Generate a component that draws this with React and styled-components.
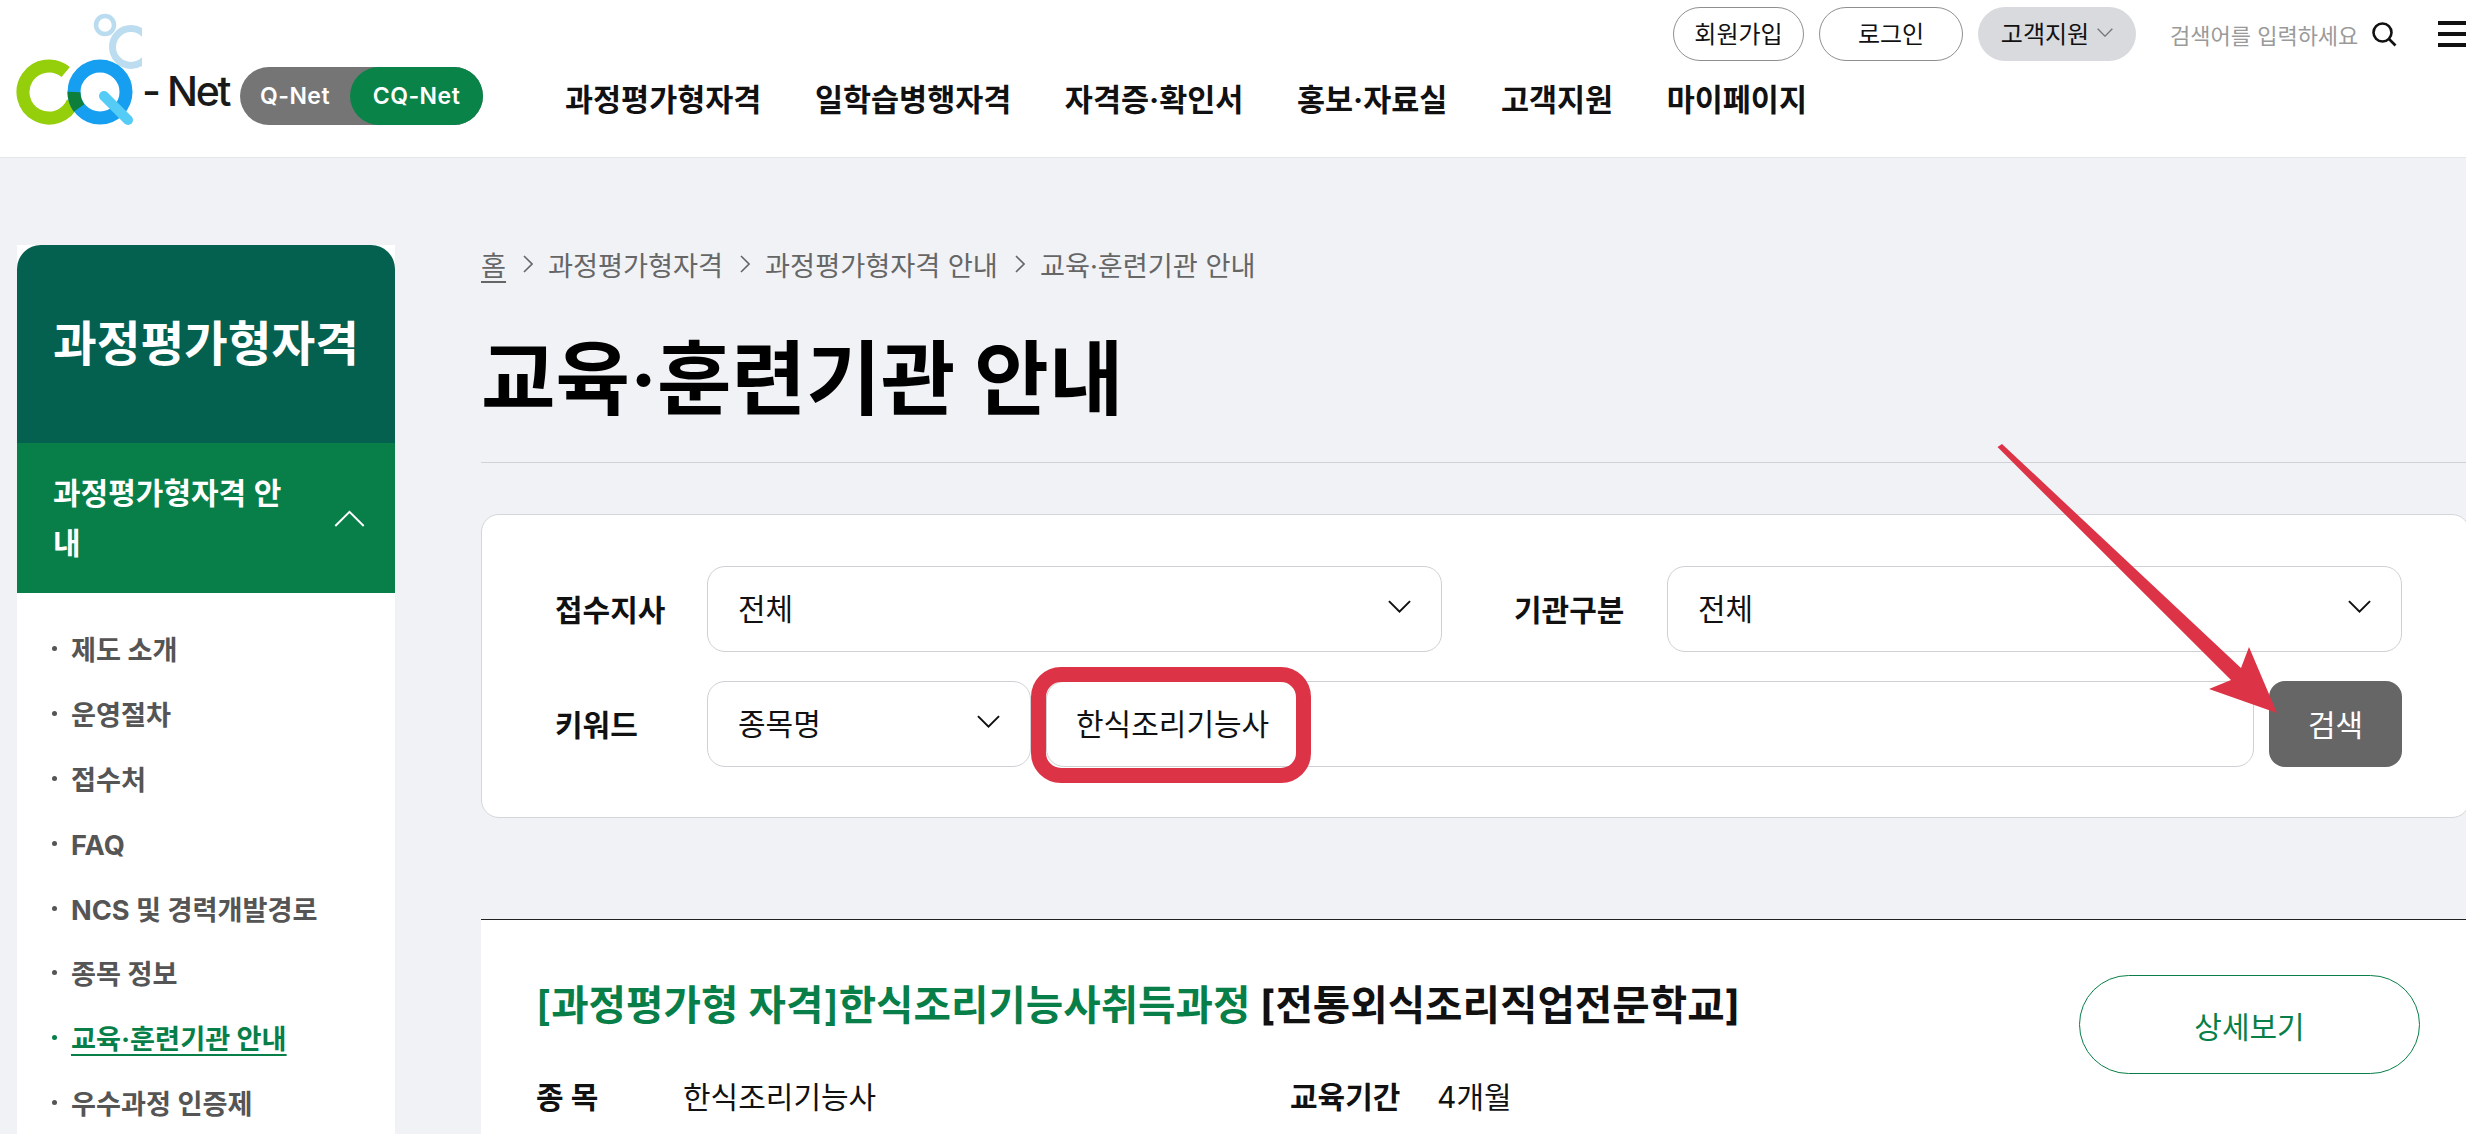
import React from 'react';
import styled, { createGlobalStyle } from 'styled-components';

const GlobalStyle = createGlobalStyle`
  html, body {
    margin: 0;
    padding: 0;
    background: #f0f2f6;
  }
  * {
    box-sizing: border-box;
  }
  body {
    font-family: Inter, "Noto Sans CJK KR", sans-serif;
    color: #111;
  }
`;

const Page = styled.div`
  position: relative;
  width: 2466px;
  height: 1134px;
  overflow: hidden;
  background: #f0f2f6;
`;

const Header = styled.header`
  display: flex;
  height: 158px;
  background: #fff;
  border-bottom: 1px solid #e4e6ea;
`;

const Brand = styled.div`
  display: flex;
  align-items: flex-start;
  flex-shrink: 0;
`;

const LogoText = styled.span`
  width: 86px;
  margin-top: 66px;
  font-size: 41px;
  line-height: 50px;
  font-weight: 500;
  letter-spacing: -2.4px;
  color: #1a1a1a;
  white-space: pre;
`;

const Toggle = styled.div`
  display: flex;
  align-items: center;
  width: 243px;
  height: 58px;
  margin: 67px 0 0 12px;
  border-radius: 29px;
  background: #757575;
`;

const ToggleItem = styled.span`
  display: flex;
  align-items: center;
  justify-content: center;
  height: 100%;
  flex: ${({ $on }) => ($on ? '0 0 133px' : '1')};
  border-radius: 29px;
  background: ${({ $on }) => ($on ? '#0a8349' : 'transparent')};
  color: #fff;
  font-size: 23px;
  font-weight: 600;
  letter-spacing: 0.5px;
`;

const HeaderRight = styled.div`
  flex: 1;
  display: flex;
  flex-direction: column;
  min-width: 0;
`;

const UtilBar = styled.div`
  display: flex;
  align-items: center;
  justify-content: flex-end;
  height: 53px;
  margin: 7px -4px 0 0;
`;

const UtilButton = styled.span`
  display: flex;
  align-items: center;
  justify-content: center;
  gap: 8px;
  width: ${({ $w }) => $w}px;
  height: 54px;
  padding-bottom: 2px;
  margin-left: 15px;
  border-radius: 27px;
  border: ${({ $fill }) => ($fill ? 'none' : '1px solid #8f8f8f')};
  background: ${({ $fill }) => ($fill ? '#d9dade' : '#fff')};
  font-size: 24px;
  color: #111;
`;

const SearchBox = styled.div`
  display: flex;
  align-items: center;
  width: 226px;
  margin-left: 34px;
  font-size: 22px;
  color: #9a9a9a;
  white-space: nowrap;
`;

const SearchIcon = styled.svg`
  margin-left: 13px;
  flex-shrink: 0;
`;

const Hamburger = styled.div`
  display: flex;
  flex-direction: column;
  justify-content: space-between;
  width: 32px;
  height: 26px;
  margin-left: 42px;
  span {
    display: block;
    height: 4px;
    background: #111;
  }
`;

const Nav = styled.nav`
  display: flex;
  gap: 53.5px;
  margin: 18px 0 0 82px;
`;

const NavItem = styled.a`
  font-size: 30.5px;
  line-height: 44px;
  font-weight: 700;
  color: #111;
  white-space: nowrap;
`;

const Main = styled.main`
  display: flex;
  align-items: flex-start;
`;

const Sidebar = styled.aside`
  flex-shrink: 0;
  width: 378px;
  margin: 87px 0 0 17px;
  background: #fff;
`;

const SideTitle = styled.h2`
  display: flex;
  align-items: center;
  height: 198px;
  margin: 0;
  padding: 0 0 8px 36px;
  border-radius: 24px 24px 0 0;
  background: #04614f;
  color: #fff;
  font-size: 47.5px;
  font-weight: 700;
  white-space: nowrap;
`;

const SideGroup = styled.div`
  display: flex;
  align-items: center;
  justify-content: space-between;
  height: 150px;
  padding: 0 30px 0 36px;
  background: #087f48;
  color: #fff;
  font-size: 30px;
  line-height: 50px;
  font-weight: 600;
  span {
    width: 240px;
  }
`;

const SideList = styled.ul`
  margin: 0;
  padding: 26px 0 0;
  list-style: none;
`;

const SideItem = styled.li`
  position: relative;
  height: 64.9px;
  padding-left: 54px;
  font-size: 27.2px;
  line-height: 64.9px;
  font-weight: 700;
  color: ${({ $on }) => ($on ? '#087f48' : '#555')};
  text-decoration: ${({ $on }) => ($on ? 'underline' : 'none')};
  text-underline-offset: 5px;
  white-space: nowrap;
  &::before {
    content: '';
    position: absolute;
    left: 35px;
    top: 27px;
    width: 5px;
    height: 5px;
    border-radius: 50%;
    background: ${({ $on }) => ($on ? '#087f48' : '#555')};
  }
`;

const Content = styled.div`
  flex: 1;
  min-width: 0;
  margin-left: 86px;
  padding-top: 86px;
`;

const Crumbs = styled.div`
  display: flex;
  align-items: center;
  height: 40px;
  font-size: 27.2px;
  color: #666;
  white-space: nowrap;
`;

const Crumb = styled.span`
  text-decoration: ${({ $home }) => ($home ? 'underline' : 'none')};
  text-underline-offset: 5px;
`;

const CrumbSep = styled.svg`
  margin: 0 15px 0 17px;
  flex-shrink: 0;
`;

const PageTitle = styled.h1`
  height: 134px;
  margin: 45px 0 0;
  border-bottom: 1px solid #cfd1d5;
  font-size: 81px;
  line-height: 100px;
  font-weight: 700;
  color: #000;
  white-space: nowrap;
`;

const SearchCard = styled.form`
  width: 1989px;
  height: 304px;
  margin-top: 51px;
  padding: 51px 67px 0 73px;
  border: 1px solid #d5d6da;
  border-radius: 18px;
  background: #fff;
`;

const FormRow = styled.div`
  display: flex;
  align-items: center;
  margin-top: ${({ $top }) => $top || 0}px;
`;

const FieldLabel = styled.label`
  flex-shrink: 0;
  width: ${({ $w }) => $w}px;
  margin-left: ${({ $left }) => $left || 0}px;
  padding-bottom: 3px;
  font-size: 30px;
  font-weight: 700;
  color: #111;
`;

const Select = styled.div`
  display: flex;
  align-items: center;
  justify-content: space-between;
  flex: ${({ $w }) => ($w ? `0 0 ${$w}px` : '1')};
  height: 86px;
  padding: 0 30px 4px;
  border: 1px solid #cfd0d4;
  border-radius: 18px;
  background: #fff;
  font-size: 30px;
`;

const InputWrap = styled.div`
  position: relative;
  flex: 1;
  margin: 0 15px;
`;

const Input = styled.div`
  display: flex;
  align-items: center;
  height: 86px;
  padding: 0 29px 4px;
  border: 1px solid #cfd0d4;
  border-radius: 18px;
  background: #fff;
  font-size: 30px;
`;

const Highlight = styled.div`
  position: absolute;
  left: -15px;
  top: -14px;
  width: 280px;
  height: 116px;
  border: 15px solid #dc3446;
  border-radius: 30px;
`;

const SearchButton = styled.span`
  display: flex;
  align-items: center;
  justify-content: center;
  flex: 0 0 133px;
  height: 86px;
  padding-bottom: 2px;
  border-radius: 16px;
  background: #666;
  color: #fff;
  font-size: 30px;
`;

const Result = styled.section`
  margin-top: 101px;
  padding: 55px 46px 0 55px;
  border-top: 1px solid #222;
  background: #fff;
  height: 300px;
`;

const ResultHead = styled.div`
  display: flex;
  align-items: flex-start;
  justify-content: space-between;
  height: 97px;
`;

const ResultTitle = styled.h3`
  margin: 1px 0 0;
  font-size: 40.7px;
  line-height: 60px;
  font-weight: 700;
  color: #111;
  white-space: nowrap;
  em {
    font-style: normal;
    font-weight: 600;
    color: #087f48;
  }
`;

const DetailButton = styled.span`
  display: flex;
  align-items: center;
  justify-content: center;
  width: 341px;
  height: 99px;
  border: 1px solid #087f48;
  border-radius: 50px;
  color: #087f48;
  font-size: 30px;
`;

const InfoRow = styled.div`
  display: flex;
  line-height: 50px;
  font-size: 30px;
`;

const InfoCell = styled.div`
  display: flex;
  width: 754px;
`;

const InfoLabel = styled.span`
  width: 147px;
  font-weight: 700;
`;

const ArrowSvg = styled.svg`
  position: absolute;
  left: 1990px;
  top: 440px;
`;

const Chevron = ({ size = 23, up, color = '#111', width = 2 }) => (
  <svg width={size} height={size * 0.6} viewBox="0 0 24 14" fill="none" stroke={color} strokeWidth={width * (24 / size)}>
    <path d={up ? 'M1 13 L12 2 L23 13' : 'M1 1 L12 12 L23 1'} />
  </svg>
);

const CrumbArrow = () => (
  <CrumbSep width="10" height="18" viewBox="0 0 10 18" fill="none" stroke="#666" strokeWidth="1.6">
    <path d="M1 1 L9 9 L1 17" />
  </CrumbSep>
);

const Logo = () => (
  <svg width="142" height="125" viewBox="0 0 142 125" fill="none">
    <circle cx="105" cy="25" r="9" stroke="#b9dcf1" strokeWidth="4.5" />
    <circle cx="131" cy="47" r="18.5" stroke="#bcdcf0" strokeWidth="7" />
    <path d="M65.7 72.1 A26 26 0 1 0 73 102" stroke="#95cf0b" strokeWidth="13" />
    <circle cx="100" cy="92" r="26" stroke="#169ff0" strokeWidth="13" />
    <path d="M74 92 A26 26 0 0 0 79 108" stroke="#0d7f3a" strokeWidth="13" />
    <path d="M104 96 L128 120" stroke="#55ccf5" strokeWidth="10" strokeLinecap="round" />
  </svg>
);

const navItems = ['과정평가형자격', '일학습병행자격', '자격증·확인서', '홍보·자료실', '고객지원', '마이페이지'];
const sideItems = ['제도 소개', '운영절차', '접수처', 'FAQ', 'NCS 및 경력개발경로', '종목 정보', '교육·훈련기관 안내', '우수과정 인증제'];
const crumbs = ['과정평가형자격', '과정평가형자격 안내', '교육·훈련기관 안내'];

export default function App() {
  return (
    <Page>
      <GlobalStyle />
      <Header>
        <Brand>
          <Logo />
          <LogoText>- Net</LogoText>
          <Toggle>
            <ToggleItem>Q-Net</ToggleItem>
            <ToggleItem $on>CQ-Net</ToggleItem>
          </Toggle>
        </Brand>
        <HeaderRight>
          <UtilBar>
            <UtilButton $w={131}>회원가입</UtilButton>
            <UtilButton $w={144}>로그인</UtilButton>
            <UtilButton $w={158} $fill>
              고객지원 <Chevron size={16} color="#777" width={1.4} />
            </UtilButton>
            <SearchBox>
              검색어를 입력하세요
              <SearchIcon width="26" height="26" viewBox="0 0 26 26" fill="none" stroke="#111" strokeWidth="2.6">
                <circle cx="11.5" cy="11.5" r="9" />
                <path d="M18 18 L24.5 24.5" />
              </SearchIcon>
            </SearchBox>
            <Hamburger>
              <span />
              <span />
              <span />
            </Hamburger>
          </UtilBar>
          <Nav>
            {navItems.map((item) => (
              <NavItem key={item}>{item}</NavItem>
            ))}
          </Nav>
        </HeaderRight>
      </Header>

      <Main>
        <Sidebar>
          <SideTitle>과정평가형자격</SideTitle>
          <SideGroup>
            <span>과정평가형자격 안내</span>
            <Chevron size={31} up color="#fff" width={2} />
          </SideGroup>
          <SideList>
            {sideItems.map((item) => (
              <SideItem key={item} $on={item === '교육·훈련기관 안내'}>
                {item}
              </SideItem>
            ))}
          </SideList>
        </Sidebar>

        <Content>
          <Crumbs>
            <Crumb $home>홈</Crumb>
            {crumbs.map((item) => (
              <React.Fragment key={item}>
                <CrumbArrow />
                <Crumb>{item}</Crumb>
              </React.Fragment>
            ))}
          </Crumbs>
          <PageTitle>교육·훈련기관 안내</PageTitle>

          <SearchCard>
            <FormRow>
              <FieldLabel $w={152}>접수지사</FieldLabel>
              <Select $w={735}>
                전체
                <Chevron />
              </Select>
              <FieldLabel $w={153} $left={72}>
                기관구분
              </FieldLabel>
              <Select>
                전체
                <Chevron />
              </Select>
            </FormRow>
            <FormRow $top={29}>
              <FieldLabel $w={152}>키워드</FieldLabel>
              <Select $w={324}>
                종목명
                <Chevron />
              </Select>
              <InputWrap>
                <Input>한식조리기능사</Input>
                <Highlight />
              </InputWrap>
              <SearchButton>검색</SearchButton>
            </FormRow>
          </SearchCard>

          <Result>
            <ResultHead>
              <ResultTitle>
                <em>[과정평가형 자격]한식조리기능사취득과정</em> [전통외식조리직업전문학교]
              </ResultTitle>
              <DetailButton>상세보기</DetailButton>
            </ResultHead>
            <InfoRow>
              <InfoCell>
                <InfoLabel>종 목</InfoLabel>
                한식조리기능사
              </InfoCell>
              <InfoCell>
                <InfoLabel>교육기간</InfoLabel>
                4개월
              </InfoCell>
            </InfoRow>
          </Result>
        </Content>
      </Main>

      <ArrowSvg width="300" height="290" viewBox="0 0 300 290">
        <polygon points="7.5,7 12,4 251,228 259,207 287,273 219,249 241,240" fill="#dc3446" />
      </ArrowSvg>
    </Page>
  );
}
